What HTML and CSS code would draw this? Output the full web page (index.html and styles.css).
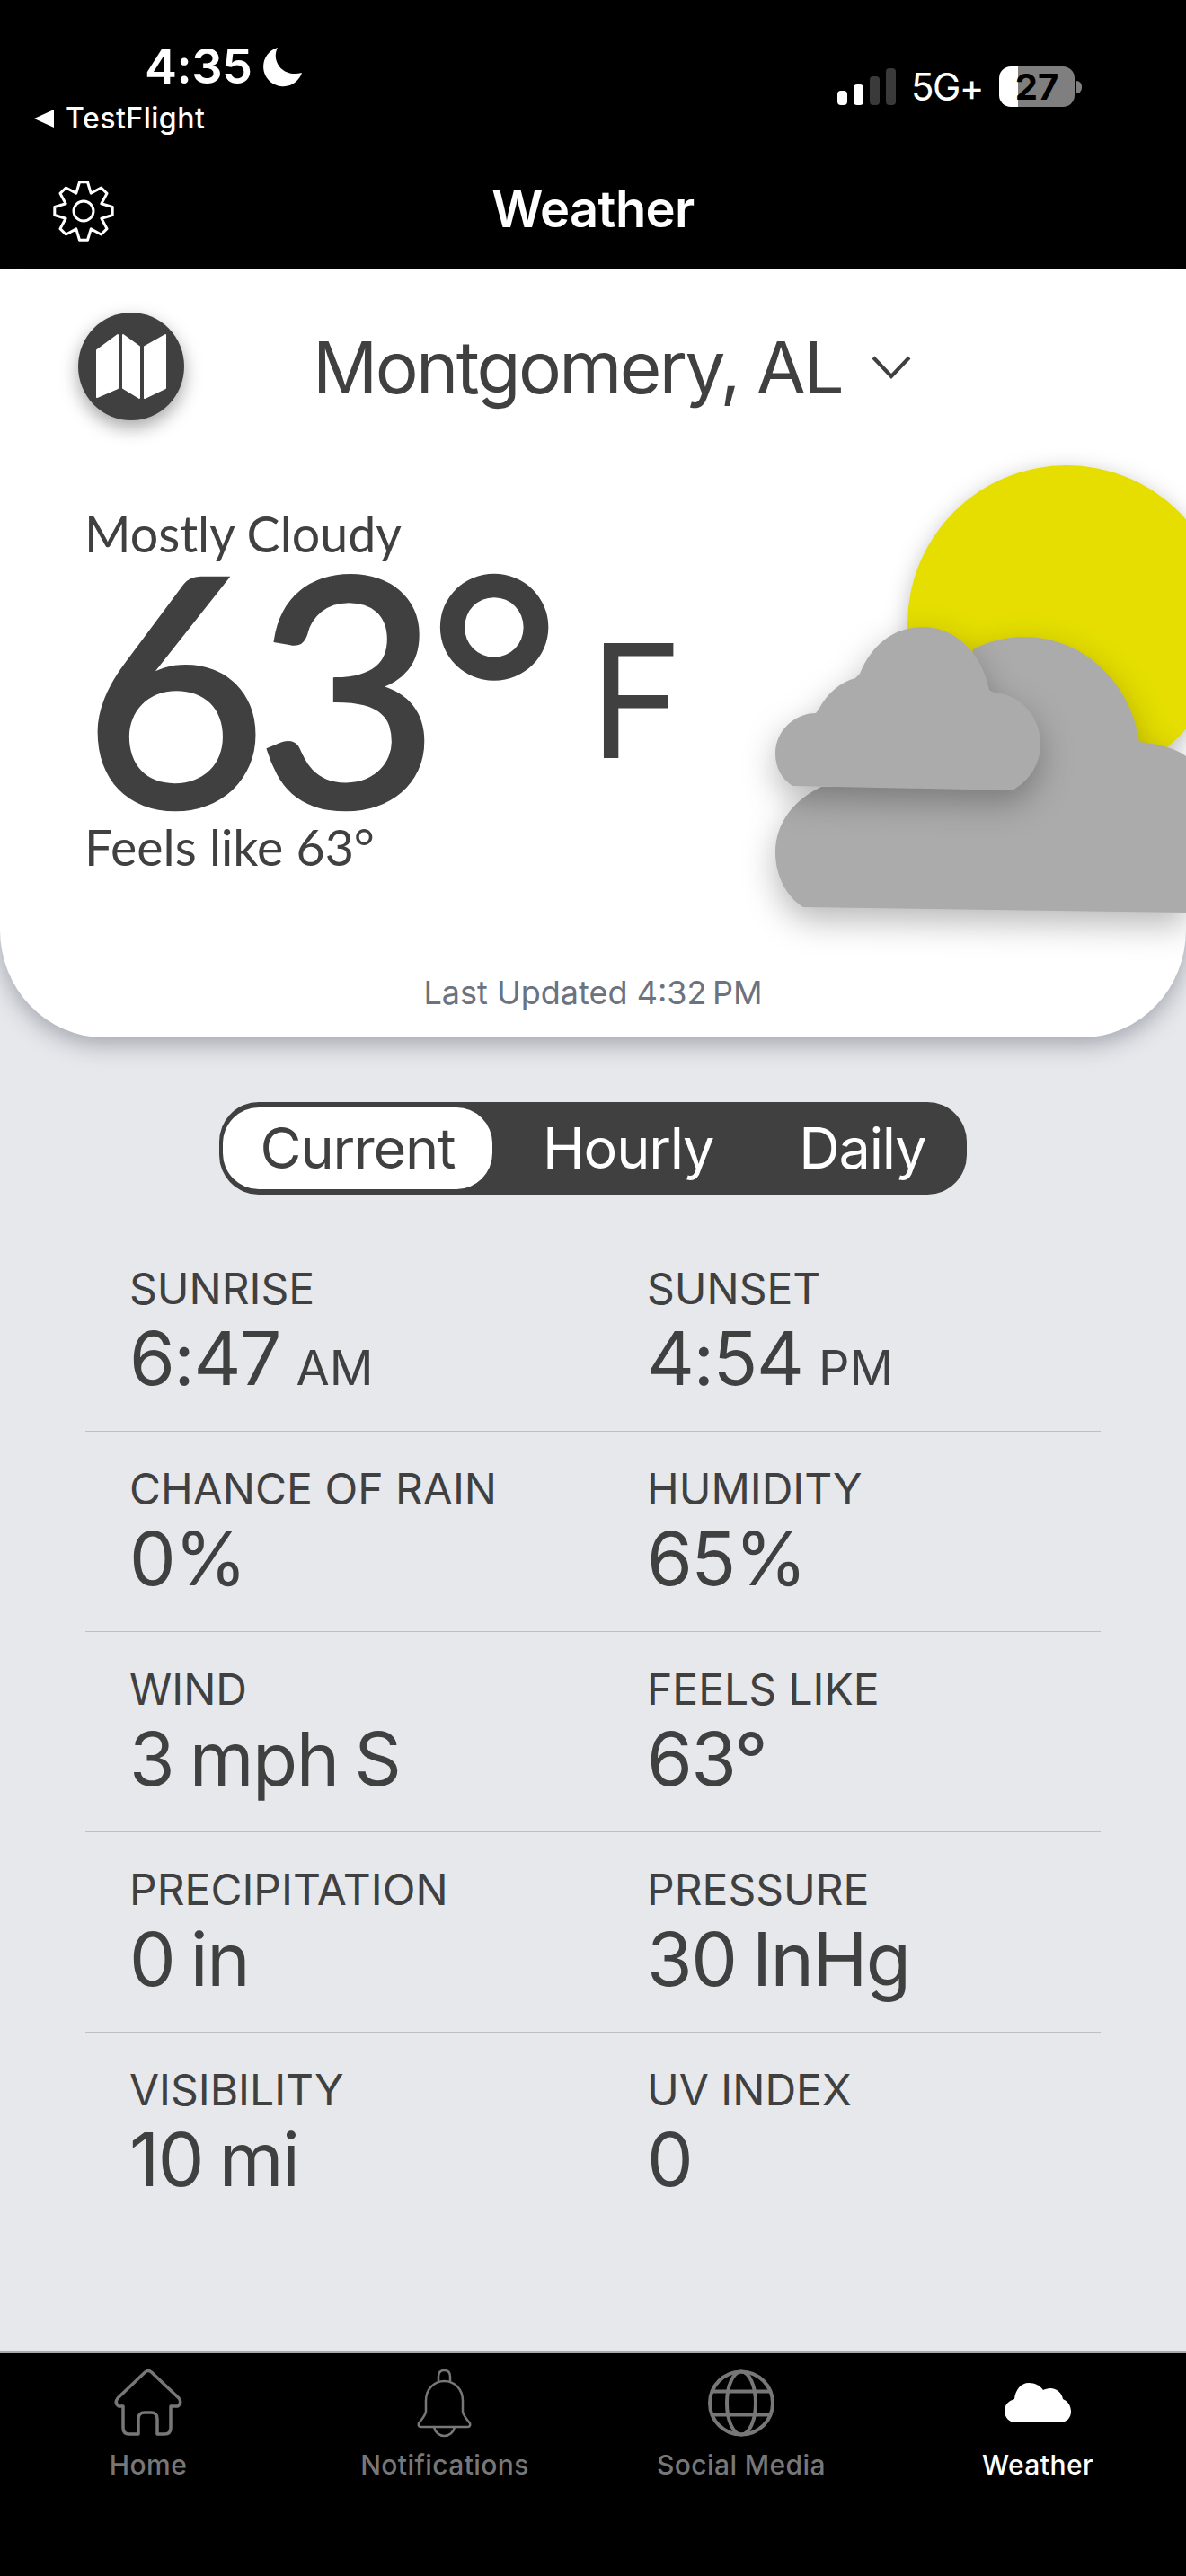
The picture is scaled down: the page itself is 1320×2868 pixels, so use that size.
FILE: index.html
```html
<!DOCTYPE html>
<html lang="en">
<head>
    <meta charset="UTF-8">
    <title>Weather</title>
    <link rel="stylesheet" href="styles.css">
</head>
<body>
<div class="app">
    <header class="top">
        <div class="status">
            <div class="status-left">
                <div class="clock">
                    <span class="time">4:35</span>
                    <svg class="moon" viewBox="0 0 42 42"><path d="M15 0A22 22 0 1 0 42 28C32 31 20 28 15 18C12 12 12 6 15 0Z"/></svg>
                </div>
                <div class="back"><span class="back-arrow"></span>TestFlight</div>
            </div>
            <div class="status-right">
                <div class="signal">
                    <span class="bar b1"></span>
                    <span class="bar b2"></span>
                    <span class="bar b3 off"></span>
                    <span class="bar b4 off"></span>
                </div>
                <span class="net">5G+</span>
                <div class="battery"><span class="battery-num">27</span></div>
                <span class="battery-nub"></span>
            </div>
        </div>
        <div class="nav">
            <svg class="gear" viewBox="-34 -34 68 68">
                <path d="M-4.5 -32.2L4.5 -32.2L8.2 -19.9L19.6 -26L26 -19.6L19.9 -8.2L32.2 -4.500L32.2 4.500L19.9 8.2L26 19.6L19.6 26L8.2 19.9L4.5 32.2L-4.5 32.2L-8.2 19.9L-19.6 26L-26 19.6L-19.9 8.2L-32.2 4.500L-32.2 -4.500L-19.9 -8.2L-26 -19.6L-19.6 -26L-8.2 -19.9Z"/>
                <circle r="11"/>
            </svg>
            <h1 class="title">Weather</h1>
        </div>
    </header>

    <section class="hero">
        <svg class="art" viewBox="0 0 500 540">
            <circle class="sun" cx="367" cy="215" r="177"/>
            <path class="cloud" d="M74 530C55 518 43 495 43 469C43 435 65 410 94 396H240L263 243C280 234 300 229 319 229C390 229 440 285 448 346C470 348 490 354 500 362V536Z"/>
            <path class="cloud" d="M62 395C50 387 43 375 43 359C43 333 65 314 88 314L91 310C102 290 115 280 132 275L137 270C150 238 175 218 207 218C242 218 272 245 281 288L286 291C316 293 338 318 338 348C338 372 325 389 307 400Z"/>
        </svg>
        <div class="hero-head">
            <button class="map-btn">
                <svg viewBox="0 0 118 120"><path d="M21 42L44 25V84L21 94ZM50 25L68 38V95L50 84ZM74 38L97 25V84L74 95Z"/></svg>
            </button>
            <div class="city">Montgomery, AL</div>
            <svg class="chevron" viewBox="0 0 44 26"><path d="M2 2L22 23L42 2"/></svg>
        </div>
        <div class="now">
            <div class="cond">Mostly Cloudy</div>
            <div class="temp"><span class="temp-num">63°</span><span class="temp-unit">F</span></div>
            <div class="feels">Feels like 63°</div>
        </div>
        <div class="updated">Last Updated 4:32&thinsp;PM</div>
    </section>

    <main class="main">
        <div class="segment">
            <span class="seg seg-on">Current</span>
            <span class="seg seg-mid">Hourly</span>
            <span class="seg seg-end">Daily</span>
        </div>
        <div class="rows">
            <div class="row">
                <div class="cell"><div class="label">SUNRISE</div><div class="value">6:47 <small>AM</small></div></div>
                <div class="cell"><div class="label">SUNSET</div><div class="value">4:54 <small>PM</small></div></div>
            </div>
            <div class="row">
                <div class="cell"><div class="label">CHANCE OF RAIN</div><div class="value">0%</div></div>
                <div class="cell"><div class="label">HUMIDITY</div><div class="value">65%</div></div>
            </div>
            <div class="row">
                <div class="cell"><div class="label">WIND</div><div class="value">3 mph S</div></div>
                <div class="cell"><div class="label">FEELS LIKE</div><div class="value">63°</div></div>
            </div>
            <div class="row">
                <div class="cell"><div class="label">PRECIPITATION</div><div class="value">0 in</div></div>
                <div class="cell"><div class="label">PRESSURE</div><div class="value">30 InHg</div></div>
            </div>
            <div class="row">
                <div class="cell"><div class="label">VISIBILITY</div><div class="value">10 mi</div></div>
                <div class="cell"><div class="label">UV INDEX</div><div class="value">0</div></div>
            </div>
        </div>
    </main>

    <nav class="tabs">
        <div class="tab">
            <svg class="tab-icon" viewBox="0 0 74 75"><path d="M33.5 3Q37 0 40.5 3L71 32Q75 37 70 41H62V65Q62 72 55 72H47V55Q47 48 40 48H33Q26 48 26 55V72H16Q9 72 9 65V41H4Q-1 37 3 32Z"/></svg>
            <span>Home</span>
        </div>
        <div class="tab">
            <svg class="tab-icon bell" viewBox="0 0 74 75"><path d="M30 14V8Q30 1 36.500 1Q43 1 43 8V14M36.500 13C25 13 16 22 16 35V47C15 52 11 56 8 60Q7 64 11 64H62Q66 64 65 60C62 56 58 52 57 47V35C57 22 48 13 36.500 13ZM25 64C26 70 31 74 36.500 74C42 74 47 70 48 64"/></svg>
            <span>Notifications</span>
        </div>
        <div class="tab">
            <svg class="tab-icon globe" viewBox="0 0 74 75"><circle cx="37" cy="37.500" r="35"/><ellipse cx="37" cy="37.500" rx="16" ry="35"/><path d="M6 24.500H68M6 50.500H68"/></svg>
            <span>Social Media</span>
        </div>
        <div class="tab tab-on">
            <svg class="tab-icon" viewBox="0 -15 74 75"><path class="tab-cloud" d="M12 44C5 44 0 38 0 31C0 25 4 20 11 18C12 8 18 0 27 0C34 0 40 3 43 8C45 7 48 6 51 6C58 6 64 11 65 18C70 20 74 25 74 32C74 39 69 44 62 44Z"/></svg>
            <span>Weather</span>
        </div>
    </nav>
</div>
</body>
</html>
```
FILE: styles.css
```css
* {
    box-sizing: border-box;
}
body {
    margin: 0;
    background: #e6e8ec;
    font-family: Inter, "Liberation Sans", sans-serif;
    color: #404040;
    overflow-x: hidden;
}
.app {
    width: 1320px;
    height: 2868px;
    display: flex;
    flex-direction: column;
    overflow: hidden;
}

/* top black area */
.top {
    height: 300px;
    background: #000;
    color: #fff;
    display: flex;
    flex-direction: column;
}
.status {
    height: 170px;
    display: flex;
    justify-content: space-between;
    padding: 44px 116px 0 38px;
}
.clock {
    display: flex;
    align-items: center;
    gap: 13px;
    height: 60px;
    padding-left: 123px;
}
.time {
    font-size: 54px;
    font-weight: 600;
    line-height: 60px;
    letter-spacing: -.5px;
}
.moon {
    width: 42px;
    height: 42px;
    fill: #fff;
    margin-top: -1px;
    overflow: visible;
}
.back {
    display: flex;
    align-items: center;
    gap: 13px;
    font-size: 32px;
    font-weight: 500;
    line-height: 40px;
    letter-spacing: .5px;
    margin-top: 8px;
}
.back-arrow {
    width: 0;
    height: 0;
    border-style: solid;
    border-width: 10px 22px 10px 0;
    border-color: transparent #fff transparent transparent;
}
.status-right {
    display: flex;
    align-items: center;
    height: 45px;
    margin-top: 30px;
}
.signal {
    display: flex;
    align-items: flex-end;
    gap: 7px;
    height: 41px;
    margin-right: 17px;
}
.bar {
    width: 11px;
    border-radius: 4px;
    background: #fff;
}
.bar.off {
    background: #3a3a3a;
}
.b1 { height: 16px; }
.b2 { height: 23px; }
.b3 { height: 32px; }
.b4 { height: 41px; }
.net {
    font-size: 42px;
    line-height: 45px;
    letter-spacing: -1.6px;
    width: 98px;
}
.battery {
    width: 84px;
    height: 45px;
    border-radius: 13px;
    background: linear-gradient(to right, #fff 21px, #7f7f7f 21px);
    display: flex;
    align-items: center;
    justify-content: center;
}
.battery-num {
    color: #000;
    font-size: 40px;
    font-weight: 700;
    line-height: 45px;
}
.battery-nub {
    width: 6px;
    height: 14px;
    margin-left: 2px;
    border-radius: 0 7px 7px 0;
    background: #7f7f7f;
}
.nav {
    flex: 1;
    display: flex;
    align-items: flex-start;
    position: relative;
    padding-left: 59px;
}
.gear {
    width: 68px;
    height: 68px;
    margin-top: 31px;
    fill: none;
    stroke: #fff;
    stroke-width: 3;
    stroke-linejoin: round;
}
.title {
    margin: 0;
    position: absolute;
    left: 0;
    right: 0;
    top: 28px;
    text-align: center;
    font-size: 56px;
    line-height: 70px;
    font-weight: 600;
    letter-spacing: -.6px;
}

/* white weather card */
.hero {
    position: relative;
    height: 855px;
    background: #fff;
    border-radius: 0 0 115px 115px / 0 0 120px 120px;
    box-shadow: 0 8px 26px rgba(40, 44, 60, .35);
    display: flex;
    flex-direction: column;
}
.art {
    position: absolute;
    top: 180px;
    left: 820px;
    width: 500px;
    height: 540px;
    overflow: visible;
}
.sun {
    fill: #e5de00;
    filter: drop-shadow(0 6px 12px rgba(0, 0, 0, .25));
}
.cloud {
    fill: #ababab;
    filter: drop-shadow(0 14px 18px rgba(0, 0, 0, .28));
}
.hero-head {
    display: flex;
    align-items: center;
    height: 120px;
    margin-top: 48px;
    padding-left: 87px;
}
.map-btn {
    width: 118px;
    height: 120px;
    padding: 0;
    border: 0;
    border-radius: 50%;
    background: #404040;
    box-shadow: 0 8px 20px rgba(0, 0, 0, .35);
}
.map-btn svg {
    display: block;
    fill: #fff;
    stroke: #fff;
    stroke-width: 2;
    stroke-linejoin: round;
}
.city {
    margin-left: 143px;
    font-size: 80px;
    line-height: 100px;
    letter-spacing: -2.6px;
    position: relative;
    top: 1px;
}
.chevron {
    width: 44px;
    height: 26px;
    margin-left: 33px;
    margin-top: 2px;
    fill: none;
    stroke: #404040;
    stroke-width: 4;
}
.now {
    position: relative;
    padding-left: 94px;
    margin-top: 94px;
    font-family: Lato, "Open Sans", sans-serif;
}
.cond {
    font-size: 55.5px;
    line-height: 64px;
}
.temp {
    display: flex;
    align-items: flex-start;
    height: 285px;
}
.temp-num {
    font-size: 354px;
    line-height: 270px;
    letter-spacing: -13px;
    margin-left: -2px;
    -webkit-text-stroke: 5px #404040;
}
.temp-unit {
    font-family: Inter, sans-serif;
    font-size: 176px;
    line-height: 180px;
    margin-left: 46px;
    margin-top: 64px;
}
.feels {
    font-size: 55.5px;
    line-height: 64px;
}
.updated {
    margin-top: auto;
    margin-bottom: 28px;
    text-align: center;
    font-size: 36px;
    line-height: 44px;
    color: #6b7280;
    position: relative;
}

/* tabs and rows */
.main {
    flex: 1;
    display: flex;
    flex-direction: column;
    align-items: center;
    padding-top: 72px;
}
.segment {
    width: 832px;
    height: 103px;
    border-radius: 44px;
    background: #404040;
    padding: 6px 4px;
    display: flex;
    align-items: center;
    color: #fff;
    font-size: 63px;
    letter-spacing: -1.2px;
}
.seg {
    line-height: 91px;
}
.seg-on {
    width: 300px;
    text-align: center;
    background: #fff;
    color: #404040;
    border-radius: 40px;
}
.seg-mid {
    margin-left: 56px;
}
.seg-end {
    margin-left: 95px;
}
.rows {
    width: 1130px;
    margin-top: 41px;
}
.row {
    display: grid;
    grid-template-columns: 576px 1fr;
    height: 223px;
    padding: 36px 0 0 49px;
    border-bottom: 1px solid #bdbfc4;
}
.row:last-child {
    border-bottom: 0;
}
.label {
    font-size: 48px;
    line-height: 56px;
    letter-spacing: 0;
}
.value {
    font-size: 82px;
    line-height: 100px;
    letter-spacing: -1.5px;
    word-spacing: -4px;
}
.value small {
    font-size: 54px;
    letter-spacing: 0;
}

/* bottom bar */
.tabs {
    height: 250px;
    background: #000;
    border-top: 2px solid #aaa;
    display: grid;
    grid-template-columns: repeat(4, 1fr);
    padding-top: 18px;
    color: #777;
}
.tab {
    display: flex;
    flex-direction: column;
    align-items: center;
    font-size: 30px;
    font-weight: 500;
    letter-spacing: .4px;
    line-height: 40px;
}
.tab-on {
    color: #fff;
}
.tab-icon {
    width: 74px;
    height: 75px;
    margin-bottom: 11px;
    fill: none;
    stroke: #777;
    stroke-width: 3.5;
    stroke-linejoin: round;
    overflow: visible;
}
.bell {
    stroke-width: 2.5;
}
.globe {
    stroke-width: 4;
}
.tab-cloud {
    fill: #fff;
    stroke: none;
}
```
